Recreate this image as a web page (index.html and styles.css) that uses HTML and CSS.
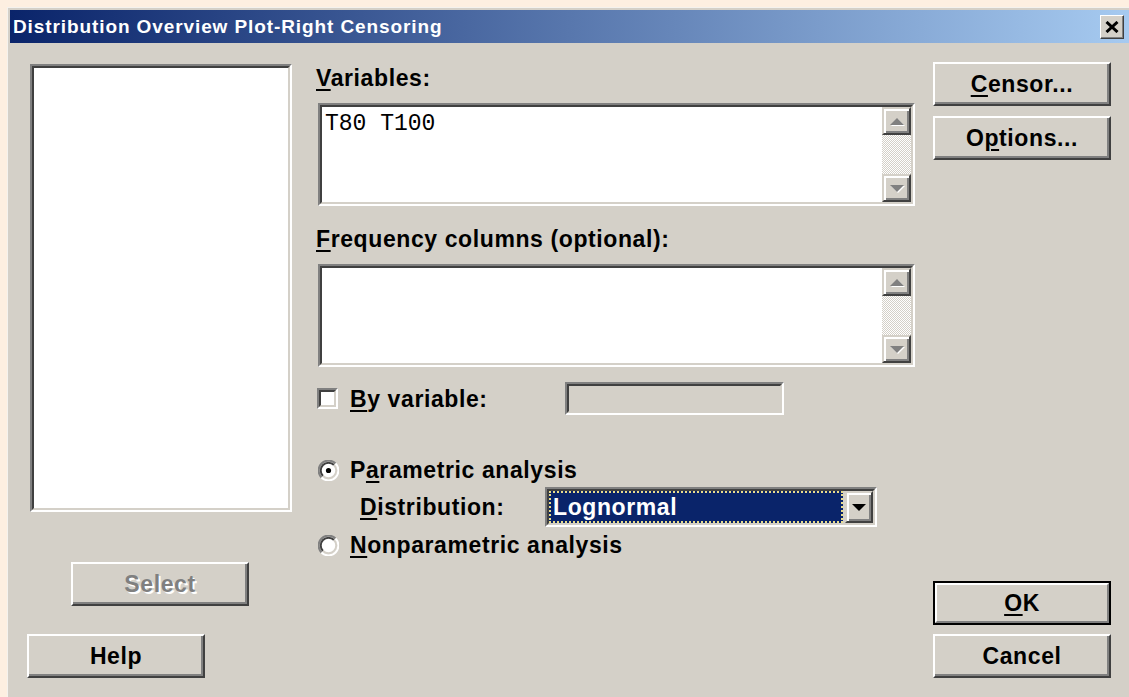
FILE: index.html
```html
<!DOCTYPE html>
<html lang="en">
<head>
<meta charset="utf-8">
<title>Distribution Overview Plot-Right Censoring</title>
<link rel="stylesheet" href="styles.css">
</head>
<body>
<div class="window">
  <div class="titlebar">
    <span class="title">Distribution Overview Plot-Right Censoring</span>
    <button class="close" type="button" aria-label="Close">
      <svg width="14" height="12" viewBox="0 0 14 12"><path d="M1.5 1 L12.5 11 M12.5 1 L1.5 11" stroke="#000" stroke-width="3" fill="none"/></svg>
    </button>
  </div>

  <div class="dialog">
    <!-- column 1: column list and its buttons -->
    <div class="col col-left">
      <div class="sunken listbox"><div class="sunken-in"></div></div>
      <button class="btn btn-select" type="button" disabled>Select</button>
      <button class="btn btn-help" type="button">Help</button>
    </div>

    <!-- column 2: the form fields -->
    <div class="col col-mid">
      <label class="lbl lbl-vars"><u>V</u>ariables:</label>
      <div class="sunken textbox">
        <div class="sunken-in">
          <div class="text-area">T80 T100</div>
          <div class="vscroll">
            <span class="sbtn"><span class="arrow up"></span></span>
            <span class="track"></span>
            <span class="sbtn"><span class="arrow down"></span></span>
          </div>
        </div>
      </div>

      <label class="lbl lbl-freq"><u>F</u>requency columns (optional):</label>
      <div class="sunken textbox">
        <div class="sunken-in">
          <div class="text-area"></div>
          <div class="vscroll">
            <span class="sbtn"><span class="arrow up"></span></span>
            <span class="track"></span>
            <span class="sbtn"><span class="arrow down"></span></span>
          </div>
        </div>
      </div>

      <div class="row row-by">
        <span class="sunken checkbox"><span class="sunken-in"></span></span>
        <span class="lbl by-text"><u>B</u>y variable:</span>
        <span class="sunken byfield"><span class="sunken-in"></span></span>
      </div>

      <div class="row row-param">
        <svg class="radio" width="21" height="21" viewBox="0 0 21 21">
          <circle cx="10.5" cy="10.5" r="9" fill="#fff"/>
          <path d="M3.5 17.5 A9.5 9.5 0 0 1 17.5 3.5" stroke="#808080" stroke-width="2" fill="none"/>
          <path d="M5 16 A7.5 7.5 0 0 1 16 5" stroke="#404040" stroke-width="2" fill="none"/>
          <path d="M17.5 3.5 A9.5 9.5 0 0 1 3.5 17.5" stroke="#fff" stroke-width="2" fill="none"/>
          <path d="M16 5 A7.5 7.5 0 0 1 5 16" stroke="#d4d0c8" stroke-width="2" fill="none"/>
          <circle cx="10.5" cy="10.5" r="2.6" fill="#000"/>
        </svg>
        <span class="lbl">P<u>a</u>rametric analysis</span>
      </div>

      <div class="row row-dist">
        <span class="lbl dist-text"><u>D</u>istribution:</span>
        <div class="sunken combo">
          <div class="sunken-in combo-in">
            <span class="combo-value">Lognormal</span>
            <span class="combo-btn"><span class="arrow-down-black"></span></span>
          </div>
        </div>
      </div>

      <div class="row row-nonparam">
        <svg class="radio" width="21" height="21" viewBox="0 0 21 21">
          <circle cx="10.5" cy="10.5" r="9" fill="#fff"/>
          <path d="M3.5 17.5 A9.5 9.5 0 0 1 17.5 3.5" stroke="#808080" stroke-width="2" fill="none"/>
          <path d="M5 16 A7.5 7.5 0 0 1 16 5" stroke="#404040" stroke-width="2" fill="none"/>
          <path d="M17.5 3.5 A9.5 9.5 0 0 1 3.5 17.5" stroke="#fff" stroke-width="2" fill="none"/>
          <path d="M16 5 A7.5 7.5 0 0 1 5 16" stroke="#d4d0c8" stroke-width="2" fill="none"/>
        </svg>
        <span class="lbl"><u>N</u>onparametric analysis</span>
      </div>
    </div>

    <!-- column 3: command buttons -->
    <div class="col col-right">
      <button class="btn btn-censor" type="button"><u>C</u>ensor...</button>
      <button class="btn btn-options" type="button">O<u>p</u>tions...</button>
      <button class="btn btn-default btn-ok" type="button"><span class="ok-in"><u>O</u>K</span></button>
      <button class="btn btn-cancel" type="button">Cancel</button>
    </div>
  </div>
</div>
</body>
</html>
```

FILE: styles.css
```css
* { box-sizing: border-box; }

html, body {
  margin: 0;
  padding: 0;
  height: 100%;
  overflow: hidden;
}

body {
  background: #fdefe1;
  font-family: "Liberation Sans", Arial, sans-serif;
}

.window {
  margin: 7px 0 0 7px;
  width: calc(100% - 7px);
  height: calc(100% - 7px);
  border-top: 1px solid #f4f2ee;
  border-left: 1px solid #f4f2ee;
  padding: 2px 0 0 2px;
  background: #d4d0c8;
  overflow: hidden;
}

/* ---- title bar ---- */
.titlebar {
  height: 33px;
  display: flex;
  align-items: center;
  padding-left: 3px;
  background: linear-gradient(to right, #0a246a 0%, #a6caf0 100%);
}

.title {
  color: #fff;
  font-weight: bold;
  font-size: 19px;
  letter-spacing: 0.9px;
  white-space: nowrap;
}

.close {
  margin-left: auto;
  margin-right: 5px;
  width: 24px;
  height: 24px;
  padding: 0;
  display: flex;
  align-items: center;
  justify-content: center;
  background: #d4d0c8;
  border: 1px solid;
  border-color: #fff #404040 #404040 #fff;
  box-shadow: inset -1px -1px 0 #808080;
}

/* ---- dialog body ---- */
.dialog {
  display: grid;
  grid-template-columns: 289px 617px 178px;
  padding-left: 17px;
  height: 660px;
}

.col {
  display: flex;
  flex-direction: column;
  align-items: flex-start;
}

/* 3D sunken frame: two nested 2px bevels */
.sunken {
  display: block;
  border: 2px solid;
  border-color: #808080 #fff #fff #808080;
}
.sunken-in {
  display: block;
  height: 100%;
  border: 2px solid;
  border-color: #404040 #d4d0c8 #d4d0c8 #404040;
  background: #fff;
}

/* raised push button */
.btn {
  width: 178px;
  height: 44px;
  padding: 0;
  background: #d4d0c8;
  border: 2px solid;
  border-color: #fff #404040 #404040 #fff;
  box-shadow: inset -2px -2px 0 #808080;
  font-family: "Liberation Sans", Arial, sans-serif;
  font-weight: bold;
  font-size: 23px;
  letter-spacing: 0.6px;
  color: #000;
}
.btn u, .lbl u { text-decoration-thickness: 2px; text-underline-offset: 3px; }

.btn:disabled {
  color: #808080;
  text-shadow: 2px 2px 0 #fff;
}

.btn-default {
  border: 2px solid #000;
  box-shadow: none;
}
.ok-in {
  display: flex;
  align-items: center;
  justify-content: center;
  height: 100%;
  border: 2px solid;
  border-color: #fff #808080 #808080 #fff;
}

/* ---- left column ---- */
.listbox {
  margin: 21px 0 0 3px;
  width: 262px;
  height: 448px;
}
.btn-select { margin: 50px 0 0 44px; }
.btn-help { margin-top: 28px; }

/* ---- middle column ---- */
.lbl {
  font-weight: bold;
  font-size: 23px;
  letter-spacing: 0.6px;
  line-height: 26px;
  white-space: nowrap;
}
.lbl-vars { margin-top: 22px; }
.lbl-freq { margin-top: 20px; }

.textbox {
  margin: 12px 0 0 2px;
  width: 597px;
  height: 103px;
}
.textbox .sunken-in { display: flex; }

.text-area {
  flex: 1;
  padding: 4px 0 0 3px;
  font-family: "Liberation Mono", "Courier New", monospace;
  font-size: 23px;
  line-height: 26px;
}

.vscroll {
  width: 29px;
  display: flex;
  flex-direction: column;
}
.sbtn {
  height: 28px;
  display: flex;
  align-items: center;
  justify-content: center;
  background: #d4d0c8;
  border: 2px solid;
  border-color: #d4d0c8 #404040 #404040 #d4d0c8;
  box-shadow: inset 2px 2px 0 #fff, inset -2px -2px 0 #808080;
}
.track {
  flex: 1;
  background: repeating-conic-gradient(#fff 0 25%, #d4d0c8 0 50%) 0 0 / 2px 2px;
}
.arrow {
  width: 0;
  height: 0;
  border-left: 7px solid transparent;
  border-right: 7px solid transparent;
}
.arrow.up { border-bottom: 7px solid #808080; filter: drop-shadow(1px 1px 0 #fff); }
.arrow.down { border-top: 7px solid #808080; filter: drop-shadow(1px 1px 0 #fff); }

.row {
  display: flex;
  align-items: center;
}
.row-by { margin-top: 15px; height: 33px; }
.checkbox {
  width: 21px;
  height: 21px;
  margin-left: 1px;
}
.by-text { margin-left: 12px; width: 215px; }
.byfield {
  width: 219px;
  height: 33px;
}
.byfield .sunken-in { background: #d4d0c8; }

.row-param { margin-top: 42px; height: 26px; }
.radio { margin-left: 2px; margin-right: 11px; flex: none; }

.row-dist { margin-top: 4px; height: 40px; }
.dist-text { margin-left: 44px; width: 185px; }
.combo {
  width: 332px;
  height: 40px;
}
.combo-in {
  display: flex;
  background: #d4d0c8;
}
.combo-value {
  width: 294px;
  height: 100%;
  padding-left: 2px;
  display: flex;
  align-items: center;
  background: #0a246a;
  border: 2px dotted #e8dc8c;
  color: #fff;
  font-weight: bold;
  font-size: 23px;
  letter-spacing: 0.6px;
}
.combo-btn {
  margin-left: 2px;
  width: 28px;
  height: 100%;
  display: flex;
  align-items: center;
  justify-content: center;
  border: 2px solid;
  border-color: #d4d0c8 #404040 #404040 #d4d0c8;
  box-shadow: inset 2px 2px 0 #fff, inset -2px -2px 0 #808080;
}
.arrow-down-black {
  width: 0;
  height: 0;
  border-left: 7px solid transparent;
  border-right: 7px solid transparent;
  border-top: 7px solid #000;
}

.row-nonparam { margin-top: 5px; height: 26px; }

/* ---- right column ---- */
.btn-censor { margin-top: 19px; }
.btn-options { margin-top: 10px; }
.btn-ok { margin-top: 421px; height: 44px; }
.btn-cancel { margin-top: 9px; }
```
